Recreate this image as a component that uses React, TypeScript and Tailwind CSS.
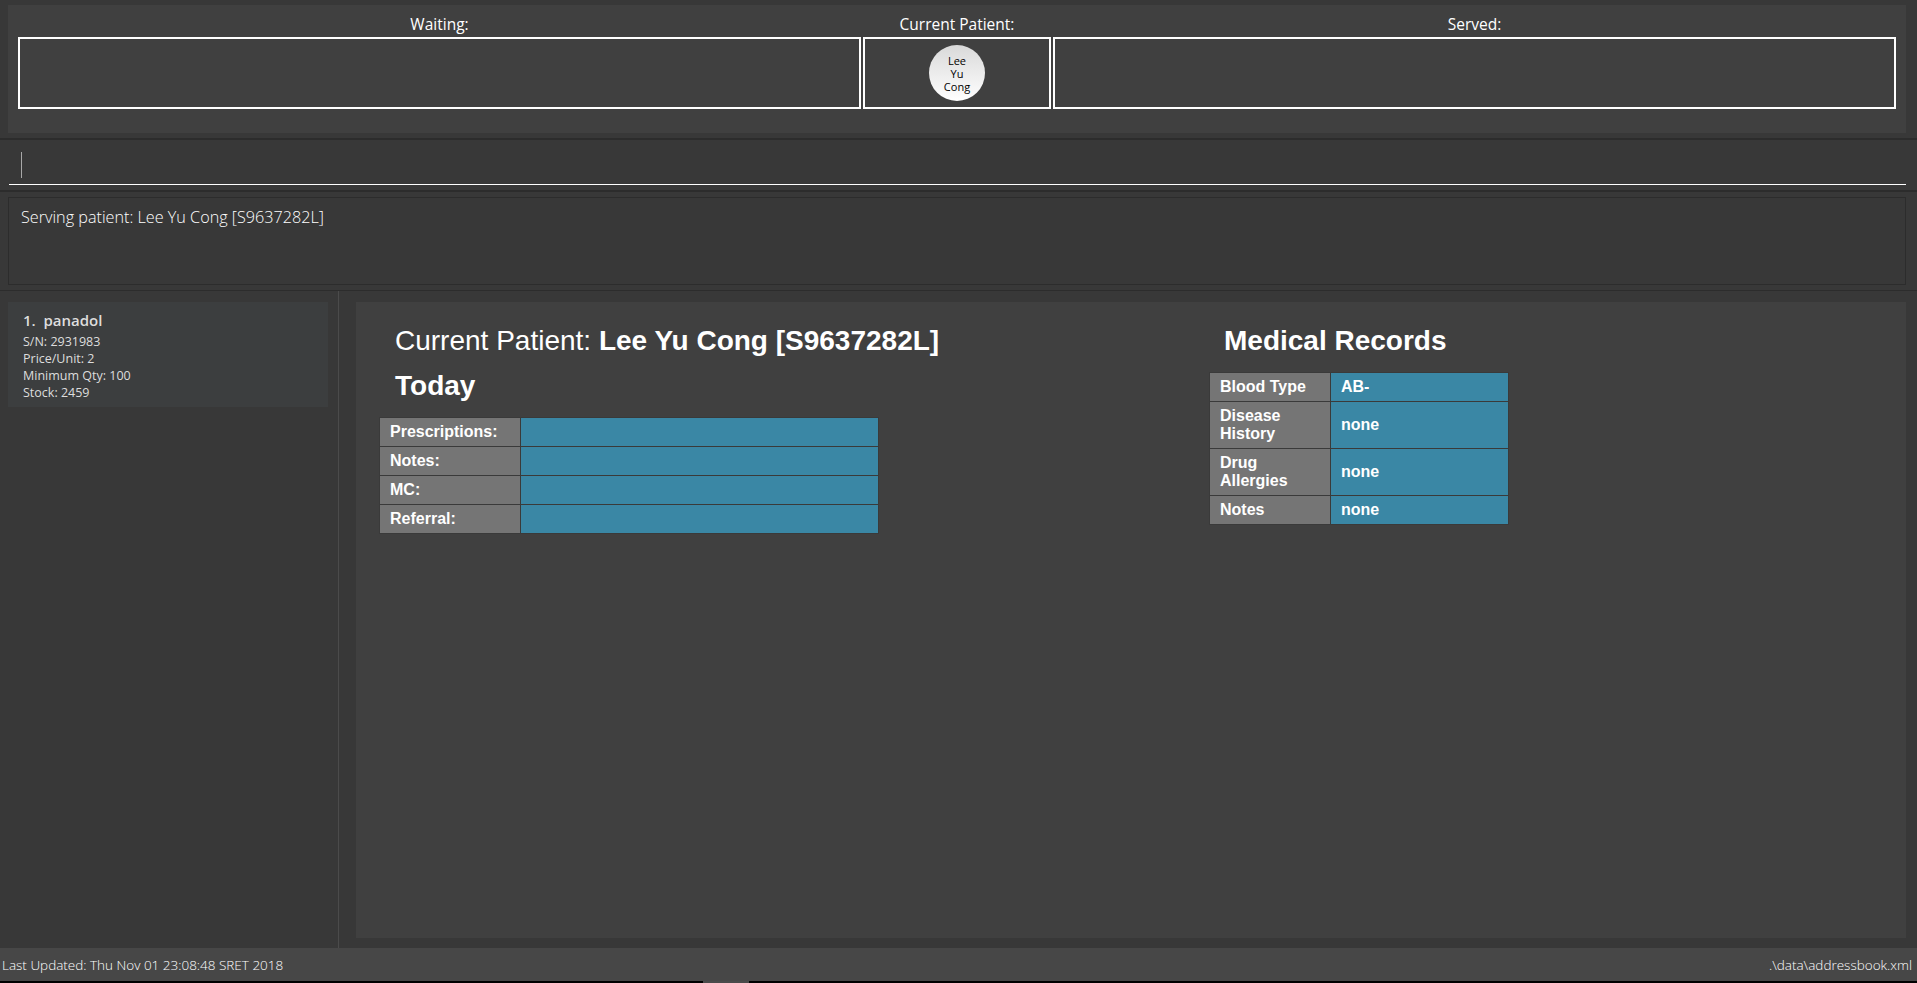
const uiFont = "font-['Open_Sans',sans-serif]"
const tableFont = "font-['Liberation_Sans',Arial,sans-serif]"

function QueueBox({ label, className, children }: { label: string; className: string; children?: React.ReactNode }) {
  return (
    <div className={`flex flex-col items-center ${className}`}>
      <div className="h-[32px] pt-[9px] text-[15.5px] leading-[20px] text-white">{label}</div>
      <div className="flex h-[72px] w-full items-center justify-center border-2 border-white">{children}</div>
    </div>
  )
}

function Row({ label, value, h, labelW, pad }: { label: string; value?: string; h: string; labelW: string; pad: string }) {
  return (
    <div className={`flex border-b border-[#3a3a3a] last:border-b-0 ${h}`}>
      <div className={`flex shrink-0 items-center border-r border-[#3a3a3a] bg-[#757575] pr-2 leading-[18px] ${pad} ${labelW}`}>{label}</div>
      <div className="flex flex-1 items-center bg-[#3a87a5] pl-[10px]">{value}</div>
    </div>
  )
}

function Separator() {
  return <div className="h-[2px] shrink-0 bg-[#2c2c2c]" />
}

export default function App() {
  return (
    <div className={`flex h-[983px] w-[1917px] flex-col overflow-hidden bg-[#383838] ${uiFont}`}>
      {/* queue */}
      <div className="h-[138px] shrink-0 pl-[8px] pr-[11px] pt-[5px]">
        <div className="flex h-[128px] gap-[2px] bg-[#404040] pl-[10px] pr-[10px]">
          <QueueBox label="Waiting:" className="w-[843px]" />
          <QueueBox label="Current Patient:" className="w-[188px]">
            <div className="flex h-[56px] w-[56px] items-center justify-center rounded-full bg-gradient-to-b from-[#d9d9d9] to-white text-center text-[11px] leading-[13px] text-black">
              Lee<br />Yu<br />Cong
            </div>
          </QueueBox>
          <QueueBox label="Served:" className="w-[843px]" />
        </div>
      </div>
      <Separator />

      {/* command box */}
      <div className="h-[50px] shrink-0 pl-[9px] pr-[11px]">
        <div className="h-[45px] border-b border-white pl-[12px] pt-[12px]">
          <div className="h-[26px] w-px bg-[#a8a8a8]" />
        </div>
      </div>
      <Separator />

      {/* result */}
      <div className="h-[98px] shrink-0 pl-[8px] pr-[11px] pt-[5px]">
        <div className="h-[88px] border border-[#2c2c2c] pl-[12px] pt-[8px] text-[16.2px] leading-[22px] font-light text-white">
          Serving patient: Lee Yu Cong [S9637282L]
        </div>
      </div>
      <div className="h-px shrink-0 bg-[#2c2c2c]" />

      {/* lower area */}
      <div className="flex h-[657px] shrink-0">
        <div className="w-[338px] shrink-0 pl-[8px] pt-[11px]">
          <div className="h-[105px] w-[320px] bg-[#3c3e3f] pl-[15px] pt-[8px] text-[12.5px] leading-[17px] text-[#dddddd]">
            <div className="mb-[3px] text-[15px] leading-[20px] font-semibold">1.&nbsp; panadol</div>
            <div>S/N: 2931983</div>
            <div>Price/Unit: 2</div>
            <div>Minimum Qty: 100</div>
            <div>Stock: 2459</div>
          </div>
        </div>
        <div className="w-px shrink-0 bg-[#4b4b4b]" />
        <div className="flex-1 pl-[17px] pr-[11px] pt-[11px]">
          <div className={`flex h-[636px] bg-[#404040] text-white ${tableFont}`}>
            <div className="w-[853px] shrink-0 pl-[23px]">
              <div className="mt-[23px] pl-[16px] text-[28px] leading-[32px]">
                Current Patient: <span className="font-bold">Lee Yu Cong [S9637282L]</span>
              </div>
              <div className="mt-[13px] pl-[16px] text-[28px] leading-[32px] font-bold">Today</div>
              <div className="mt-[15px] w-[500px] border border-[#3a3a3a] text-[16px] font-bold">
                <Row label="Prescriptions:" h="h-[29px]" labelW="w-[141px]" pad="pl-[10px]" />
                <Row label="Notes:" h="h-[29px]" labelW="w-[141px]" pad="pl-[10px]" />
                <Row label="MC:" h="h-[29px]" labelW="w-[141px]" pad="pl-[10px]" />
                <Row label="Referral:" h="h-[28px]" labelW="w-[141px]" pad="pl-[10px]" />
              </div>
            </div>
            <div>
              <div className="mt-[23px] pl-[15px] text-[28px] leading-[32px] font-bold">Medical Records</div>
              <div className="mt-[15px] w-[300px] border border-[#3a3a3a] text-[16px] font-bold">
                <Row label="Blood Type" value="AB-" h="h-[29px]" labelW="w-[121px]" pad="pl-[10px]" />
                <Row label="Disease History" value="none" h="h-[47px]" labelW="w-[121px]" pad="pl-[10px]" />
                <Row label="Drug Allergies" value="none" h="h-[47px]" labelW="w-[121px]" pad="pl-[10px]" />
                <Row label="Notes" value="none" h="h-[28px]" labelW="w-[121px]" pad="pl-[10px]" />
              </div>
            </div>
          </div>
        </div>
      </div>

      {/* status bar */}
      <div className="flex h-[33px] shrink-0 items-center justify-between bg-[#474747] pl-[2px] pr-[5px] pt-[2px] text-[13.5px] font-light text-white">
        <span>Last Updated: Thu Nov 01 23:08:48 SRET 2018</span>
        <span>.\data\addressbook.xml</span>
      </div>
      <div className="flex h-[2px] shrink-0 bg-black pl-[703px]">
        <div className="h-full w-[46px] bg-[#4a4a4a]" />
      </div>
    </div>
  )
}
